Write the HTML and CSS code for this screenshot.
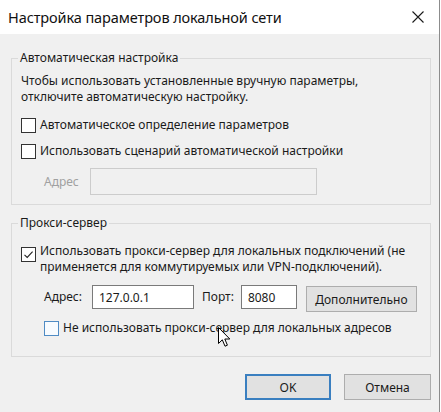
FILE: index.html
```html
<!DOCTYPE html>
<html lang="ru">
<head>
<meta charset="utf-8">
<title>Настройка параметров локальной сети</title>
<link rel="stylesheet" href="styles.css">
</head>
<body>
<div class="window">
  <div class="titlebar">
    <span class="title">Настройка параметров локальной сети</span>
    <svg class="close" width="12" height="12" viewBox="0 0 12 12"><path d="M0.5 0.5 L11.5 11.5 M11.5 0.5 L0.5 11.5" stroke="#1a1a1a" stroke-width="1.1" fill="none"/></svg>
  </div>
  <div class="content">
    <fieldset class="group group-auto">
      <legend>Автоматическая настройка</legend>
      <p class="desc">Чтобы использовать установленные вручную параметры,<br>отключите автоматическую настройку.</p>
      <div class="check-row row-1"><span class="box"></span><span>Автоматическое определение параметров</span></div>
      <div class="check-row row-2"><span class="box"></span><span>Использовать сценарий автоматической настройки</span></div>
      <div class="addr-row">
        <span class="label-disabled">Адрес</span>
        <span class="input input-disabled"></span>
      </div>
    </fieldset>
    <fieldset class="group group-proxy">
      <legend>Прокси-сервер</legend>
      <div class="check-row multi"><span class="box checked"><svg width="13" height="13" viewBox="0 0 13 13"><path d="M2.5 6.8 L5.2 9.4 L10.6 3.6" stroke="#222" stroke-width="1.1" fill="none"/></svg></span><span>Использовать прокси-сервер для локальных подключений (не<br>применяется для коммутируемых или VPN-подключений).</span></div>
      <div class="proxy-row">
        <span class="lbl">Адрес:</span>
        <span class="input input-addr">127.0.0.1</span>
        <span class="lbl lbl-port">Порт:</span>
        <span class="input input-port">8080</span>
        <button class="btn btn-adv">Дополнительно</button>
      </div>
      <div class="check-row row-local"><span class="box hover"></span><span>Не использовать прокси-сервер для локальных адресов</span></div>
    </fieldset>
    <div class="actions">
      <button class="btn btn-ok">OK</button>
      <button class="btn btn-cancel">Отмена</button>
    </div>
  </div>
  <svg class="cursor" width="13" height="21" viewBox="0 0 13 21"><path d="M0.5 0.5 L0.5 16.5 L4.3 12.8 L7 19.2 L9.4 18.2 L6.8 12 L11.8 12 Z" fill="#fff" stroke="#000" stroke-width="1" stroke-linejoin="miter"/></svg>
</div>
</body>
</html>
```
FILE: styles.css
```css
* { box-sizing: border-box; }
html, body { margin: 0; padding: 0; }
body {
  background: #ffffff;
  font-family: "Noto Sans", "Segoe UI", "Liberation Sans", sans-serif;
  font-size: 12px;
  color: #1a1a1a;
}
.window {
  position: relative;
  width: 440px;
  height: 412px;
  background: #f0f0f0;
  border-right: 1px solid #8c8c8c;
  overflow: hidden;
}
.titlebar {
  height: 34px;
  background: #ffffff;
  display: flex;
  align-items: center;
  justify-content: space-between;
  padding: 0 15px 0 8px;
}
.title {
  font-size: 14.5px;
  color: #111;
  letter-spacing: -0.1px;
}
.close { display: block; }
.content {
  padding: 16px 8px 0 11px;
  display: flex;
  flex-direction: column;
}
.group {
  margin: 0;
  border: 1px solid #dadada;
  padding: 0 9px;
  min-width: 0;
}
.group legend {
  margin-left: -3px;
  padding: 0 2px;
  line-height: 16px;
  color: #1a1a1a;
}
.group-auto { padding-top: 7px; padding-bottom: 9px; }
.group-proxy { margin-top: 10px; padding-top: 12px; padding-bottom: 20px; }
.desc {
  margin: 0;
  line-height: 16px;
}
.check-row {
  display: flex;
  align-items: center;
  line-height: 16px;
  gap: 4px;
}
.box {
  width: 15px;
  height: 15px;
  border: 1px solid #333;
  background: #fff;
  flex: 0 0 auto;
  display: flex;
  align-items: center;
  justify-content: center;
}
.row-1 { margin-top: 12px; }
.row-2 { margin-top: 10px; }
.addr-row {
  display: flex;
  align-items: center;
  margin-top: 9px;
  padding-left: 23px;
  gap: 11px;
}
.label-disabled { color: #a0a0a0; }
.input {
  display: flex;
  align-items: center;
  background: #fff;
  border: 1px solid #7a7a7a;
  padding: 0 6px;
  height: 24px;
}
.input-disabled {
  width: 227px;
  height: 27px;
  background: #f0f0f0;
  border-color: #cccccc;
}
.multi { align-items: flex-start; }
.multi .box { margin-top: 4px; }
.proxy-row {
  display: flex;
  align-items: flex-start;
  margin-top: 10px;
  padding-left: 23px;
}
.lbl { line-height: 24px; }
.input-addr { width: 102px; margin-left: 10px; }
.lbl-port { margin-left: 8px; }
.input-port { width: 56px; margin-left: 7px; }
.btn {
  font-family: inherit;
  font-size: 12px;
  color: #1a1a1a;
  background: #e1e1e1;
  border: 1px solid #adadad;
  padding: 0;
  margin: 0;
}
.btn-adv { width: 111px; height: 26px; margin-left: 9px; margin-top: 1px; }
.row-local { margin-top: 8px; padding-left: 23px; }
.box.hover { border-color: #4f8bc4; background: #f7fbff; }
.actions {
  display: flex;
  justify-content: flex-end;
  gap: 13px;
  margin-top: 17px;
}
.btn-ok { width: 86px; height: 26px; border: 2px solid #3a7fc0; }
.btn-cancel { width: 87px; height: 26px; }
.cursor {
  position: absolute;
  left: 218px;
  top: 327px;
}
```
